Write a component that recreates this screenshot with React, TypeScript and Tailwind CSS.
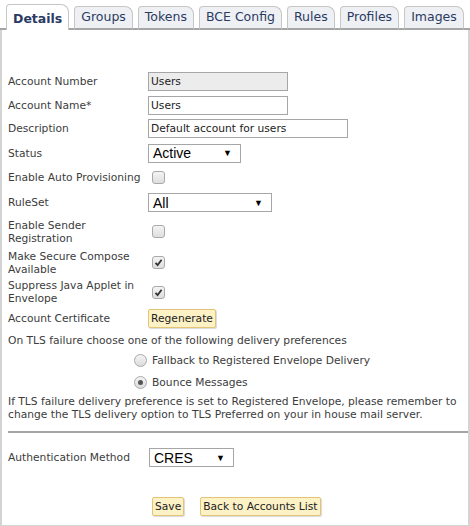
import React from "react";

const tabs = ["Details", "Groups", "Tokens", "BCE Config", "Rules", "Profiles", "Images"];

function Check({ checked }: { checked?: boolean }) {
  return (
    <span className="inline-flex h-[13px] w-[13px] items-center justify-center rounded-[3px] border border-[#a9a9a9] bg-gradient-to-b from-[#f4f4f4] to-[#dedede]">
      {checked && (
        <svg width="9" height="9" viewBox="0 0 9 9">
          <path d="M1.5 4.8 L3.6 7 L7.6 1.8" fill="none" stroke="#333" strokeWidth="1.8" />
        </svg>
      )}
    </span>
  );
}

function Radio({ checked }: { checked?: boolean }) {
  return (
    <span className="inline-flex h-[13px] w-[13px] items-center justify-center rounded-full border border-[#a9a9a9] bg-gradient-to-b from-[#f4f4f4] to-[#dcdcdc]">
      {checked && <span className="h-[5px] w-[5px] rounded-full bg-[#555]" />}
    </span>
  );
}

function Select({ value, width }: { value: string; width: string }) {
  return (
    <span
      className={`inline-flex h-[19px] ${width} items-center justify-between border border-[#a6a6a6] bg-white pl-[4px] pr-[8px] text-[14px] leading-[16px] text-black`}
      style={{ fontFamily: '"Liberation Sans", Arial, sans-serif' }}
    >
      {value}
      <span className="text-[9px]">▼</span>
    </span>
  );
}

function Btn({ label }: { label: string }) {
  return (
    <span className="inline-block rounded-[2px] border border-[#e4c476] bg-[#fdf1c6] px-[2px] py-[2px] text-[#222] shadow-[1px_1px_1px_rgba(0,0,0,0.15)]">
      {label}
    </span>
  );
}

function Row({ label, children, h = "h-[24px]" }: { label: React.ReactNode; children?: React.ReactNode; h?: string }) {
  return (
    <div className={`flex ${h} items-center`}>
      <div className="w-[140px]">{label}</div>
      <div className="flex items-center">{children}</div>
    </div>
  );
}

export default function App() {
  return (
    <div
      className="h-[526px] w-[470px] bg-white text-[10.7px] leading-[13px] text-[#3c3c3c]"
      style={{ fontFamily: '"DejaVu Sans", Verdana, sans-serif' }}
    >
      <div className="flex h-[30px] items-end gap-[5px] border-b-2 border-[#a5a5a5] pl-[6px]">
        {tabs.map((t, i) => (
          <div
            key={t}
            className={`-mb-[2px] flex items-end whitespace-nowrap rounded-tl-[4px] rounded-tr-[8px] border border-[#c6c6c6] px-[6px] pb-[4px] text-[12.5px] leading-[15px] text-[#2a3a63] ${
              i === 0 ? "h-[26px] border-b-0 bg-white font-bold" : "h-[24px] border-b-2 border-b-[#a5a5a5] bg-[#eef0f3]"
            }`}
          >
            {t}
          </div>
        ))}
      </div>
      <div className="h-[496px] border-x-2 border-b border-[#d4d4d4] pl-[6px] pt-[39px]">
        <Row label="Account Number">
          <span className="flex h-[19px] w-[140px] items-center border border-[#a6a6a6] bg-[#ececec] pl-[2px] text-[#222]">Users</span>
        </Row>
        <Row label="Account Name*">
          <span className="flex h-[19px] w-[140px] items-center border border-[#a6a6a6] bg-white pl-[2px] text-[#222]">Users</span>
        </Row>
        <Row label="Description" h="h-[23px]">
          <span className="flex h-[19px] w-[200px] items-center border border-[#a6a6a6] bg-white pl-[2px] text-[#222]">Default account for users</span>
        </Row>
        <Row label="Status" h="h-[26px]">
          <Select value="Active" width="w-[93px]" />
        </Row>
        <Row label="Enable Auto Provisioning" h="h-[23px]">
          <span className="ml-[4px] flex"><Check /></span>
        </Row>
        <Row label="RuleSet" h="h-[27px]">
          <Select value="All" width="w-[124px]" />
        </Row>
        <Row label={<>Enable Sender<br />Registration</>} h="h-[31px]">
          <span className="ml-[4px] flex"><Check /></span>
        </Row>
        <Row label={<>Make Secure Compose<br />Available</>} h="h-[31px]">
          <span className="ml-[4px] flex"><Check checked /></span>
        </Row>
        <Row label={<>Suppress Java Applet in<br />Envelope</>} h="h-[28px]">
          <span className="ml-[4px] flex"><Check checked /></span>
        </Row>
        <Row label="Account Certificate" h="h-[24px]">
          <Btn label="Regenerate" />
        </Row>
        <div className="mt-[4px]">On TLS failure choose one of the following delivery preferences</div>
        <div className="ml-[126px] mt-[7px] flex items-center gap-[5px]"><Radio /> Fallback to Registered Envelope Delivery</div>
        <div className="ml-[126px] mt-[9px] flex items-center gap-[5px]"><Radio checked /> Bounce Messages</div>
        <div className="mt-[6px] pr-[6px]">
          If TLS failure delivery preference is set to Registered Envelope, please remember to change the TLS delivery option to TLS Preferred on your in house mail server.
        </div>
        <div className="mt-[10px] border-t-2 border-[#a5a5a5]" />
        <div className="mt-[15px] flex items-center">
          <div className="w-[141px]">Authentication Method</div>
          <Select value="CRES" width="w-[85px]" />
        </div>
        <div className="ml-[144px] mt-[30px] flex gap-[16px]">
          <Btn label="Save" />
          <Btn label="Back to Accounts List" />
        </div>
      </div>
    </div>
  );
}
